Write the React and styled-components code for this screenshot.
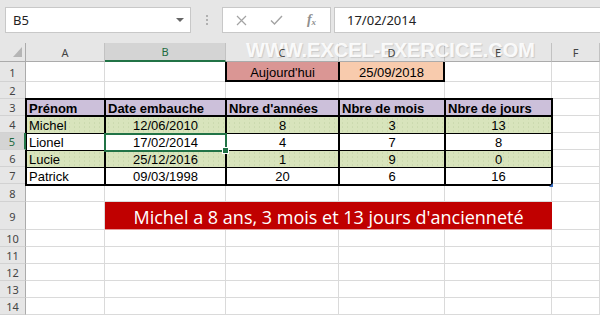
import React from 'react';
import styled, { createGlobalStyle } from 'styled-components';

const Global = createGlobalStyle`
  html, body { margin: 0; padding: 0; background: #fff; }
  body { width: 600px; height: 317px; overflow: hidden; font-family: "Liberation Sans", Arial, sans-serif; }
  * { box-sizing: border-box; }
`;

const Window = styled.div`
  width: 600px;
  height: 317px;
  display: flex;
  flex-direction: column;
  overflow: hidden;
  background: #e6e6e6;
`;

/* ---------- formula bar ---------- */
const Toolbar = styled.div`
  flex: none;
  height: 43px;
  padding: 7px 0 0 5px;
  display: flex;
  align-items: flex-start;
  background: #e6e6e6;
`;

const NameBox = styled.div`
  width: 186px;
  height: 26px;
  background: #fff;
  border: 1px solid #c8c8c8;
  display: flex;
  align-items: center;
  justify-content: space-between;
  padding: 0 6px 0 7px;
  font: 13px "Noto Sans", sans-serif;
  color: #222;
`;

const Caret = styled.span`
  width: 0;
  height: 0;
  border-left: 4px solid transparent;
  border-right: 4px solid transparent;
  border-top: 4px solid #666;
`;

const Grip = styled.div`
  width: 31px;
  height: 26px;
  display: flex;
  flex-direction: column;
  align-items: center;
  justify-content: center;
  gap: 2px;
`;

const GripDot = styled.span`
  width: 2px;
  height: 2px;
  background: #b0b0b0;
`;

const FxBox = styled.div`
  width: 109px;
  height: 26px;
  background: #fff;
  border: 1px solid #c8c8c8;
  display: flex;
  align-items: center;
  padding-left: 1px;
`;

const FxSlot = styled.div`
  width: 35px;
  height: 24px;
  display: flex;
  align-items: center;
  justify-content: center;
  color: #a3a3a3;
`;

const FxLabel = styled.span`
  font: italic bold 14px "Liberation Serif", serif;
  color: #8f8f8f;
  & sub { font-size: 9px; vertical-align: -1px; }
`;

const FormulaInput = styled.div`
  flex: 1;
  height: 26px;
  margin-left: 3px;
  margin-right: -3px;
  background: #fff;
  border: 1px solid #c8c8c8;
  display: flex;
  align-items: center;
  padding-left: 12px;
  font: 13px "Noto Sans", sans-serif;
  color: #222;
`;

/* ---------- sheet ---------- */
const Sheet = styled.div`
  position: relative;
  flex: 1;
  display: grid;
  grid-template-columns: 26px 79px 121px 113px 106px 107px 1fr;
  grid-template-rows: 19px 20px repeat(6, 17px) 18px 28px repeat(5, 17px);
  background: #fff;
  overflow: hidden;
`;

const Corner = styled.div`
  grid-row: 1;
  grid-column: 1;
  background: #e6e6e6;
  border-right: 1px solid #ababab;
  border-bottom: 1px solid #ababab;
  display: flex;
  align-items: flex-end;
  justify-content: flex-end;
  padding: 0 3px 4px 0;
`;

const ColHead = styled.div`
  grid-row: 1;
  grid-column: ${p => p.$c};
  display: flex;
  align-items: center;
  justify-content: center;
  background: ${p => (p.$sel ? '#d4d4d4' : '#e6e6e6')};
  border-right: 1px solid #c2c2c2;
  border-bottom: ${p => (p.$sel ? '2px solid #217346' : '1px solid #ababab')};
  font: 11px "Noto Sans", sans-serif;
  color: ${p => (p.$sel ? '#1e6b41' : '#444')};
`;

const HeadLabel = styled.span`
  position: relative;
  z-index: 2;
`;

const RowHead = styled.div`
  grid-row: ${p => p.$r};
  grid-column: 1;
  position: relative;
  z-index: ${p => (p.$sel ? 3 : 'auto')};
  display: flex;
  align-items: center;
  justify-content: center;
  padding-top: 1px;
  background: ${p => (p.$sel ? '#d4d4d4' : '#e6e6e6')};
  border-bottom: 1px solid #d2d2d2;
  border-right: ${p => (p.$sel ? '2px solid #217346' : '1px solid #ababab')};
  font: 11px "Noto Sans", sans-serif;
  color: ${p => (p.$sel ? '#1e6b41' : '#444')};
`;

const GridCell = styled.div`
  grid-row: ${p => p.$r};
  grid-column: ${p => p.$c};
  border-right: 1px solid #dadada;
  border-bottom: 1px solid #dadada;
  background: #fff;
`;

const Watermark = styled.div`
  position: absolute;
  top: 0;
  left: 246px;
  z-index: 1;
  font: bold 20px "Liberation Sans", Arial, sans-serif;
  line-height: 14px;
  color: rgba(255, 255, 255, 0.9);
  text-shadow: 1px 1px 1px rgba(0, 0, 0, 0.12);
  white-space: nowrap;
  pointer-events: none;
`;

const TodayBox = styled.div`
  grid-row: 2;
  grid-column: 4 / 6;
  margin-left: -1px;
  position: relative;
  z-index: 1;
  display: grid;
  grid-template-columns: 111px 1fr;
  column-gap: 2px;
  padding: 0 2px 2px;
  background: #000;
`;

const DataTable = styled.div`
  grid-row: 4 / 9;
  grid-column: 2 / 7;
  margin: -1px -1px -2px -1px;
  position: relative;
  z-index: 1;
  display: grid;
  grid-template-columns: 77px 119px 111px 104px 1fr;
  grid-template-rows: repeat(5, 1fr);
  gap: 1px 2px;
  padding: 2px;
  background: #000;
`;

const fills = {
  white: '#ffffff',
  purple: '#ccc0da',
  green: '#d8e4bc',
  pink: '#da9694',
  peach: '#f8cbad',
};

const TCell = styled.div`
  position: relative;
  display: flex;
  align-items: flex-end;
  justify-content: ${p => (p.$left ? 'flex-start' : 'center')};
  padding: 0 2px;
  line-height: 14px;
  font-size: 13px;
  font-family: "Liberation Sans", Arial, sans-serif;
  font-weight: ${p => (p.$bold ? 700 : 400)};
  color: #000;
  white-space: nowrap;
  background-color: ${p => fills[p.$fill || 'white']};
  background-image: ${p =>
    p.$fill === 'green'
      ? 'radial-gradient(circle, rgba(150,175,120,0.18) 0.6px, transparent 0.9px)'
      : 'none'};
  background-size: 5px 4px;
  box-shadow: ${p => (p.$head ? 'inset 0 -1px 0 #000' : 'none')};
`;

const Selection = styled.div`
  position: absolute;
  top: -1px;
  left: -2px;
  right: -2px;
  bottom: -2px;
  border: 2px solid #217346;
  z-index: 2;
  pointer-events: none;
`;

const FillHandle = styled.span`
  position: absolute;
  right: -4px;
  bottom: -4px;
  width: 7px;
  height: 7px;
  background: #217346;
  border: 1px solid #fff;
`;

const TableMark = styled.span`
  position: absolute;
  right: -2px;
  bottom: -3px;
  width: 0;
  height: 0;
  border-left: 4px solid transparent;
  border-bottom: 4px solid #3b6fc2;
  z-index: 2;
`;

const Banner = styled.div`
  grid-row: 10;
  grid-column: 3 / 7;
  background: #c00000;
  border-bottom: 1px solid #e49a9a;
  display: flex;
  align-items: center;
  justify-content: center;
  padding-top: 2px;
  color: #fff;
  font: 18px "Open Sans", "Noto Sans", sans-serif;
  white-space: nowrap;
`;

const COLS = ['A', 'B', 'C', 'D', 'E', 'F'];

const covered = (r, c) => {
  if (r === 1 && (c === 2 || c === 3)) return true;
  if (r >= 3 && r <= 7 && c <= 4) return true;
  if (r === 9 && c >= 1 && c <= 4) return true;
  return false;
};

const tableRows = [
  { fill: 'purple', head: true, cells: ['Prénom', 'Date embauche', "Nbre d'années", 'Nbre de mois', 'Nbre de jours'] },
  { fill: 'green', cells: ['Michel', '12/06/2010', '8', '3', '13'] },
  { fill: 'white', cells: ['Lionel', '17/02/2014', '4', '7', '8'] },
  { fill: 'green', cells: ['Lucie', '25/12/2016', '1', '9', '0'] },
  { fill: 'white', cells: ['Patrick', '09/03/1998', '20', '6', '16'] },
];

const XIcon = () => (
  <svg width="11" height="11" viewBox="0 0 11 11">
    <path d="M1 1 L10 10 M10 1 L1 10" stroke="#a3a3a3" strokeWidth="1.2" fill="none" />
  </svg>
);

const CheckIcon = () => (
  <svg width="13" height="10" viewBox="0 0 13 10">
    <path d="M1 5.5 L4.5 9 L12 1" stroke="#a3a3a3" strokeWidth="1.4" fill="none" />
  </svg>
);

const CornerTriangle = () => (
  <svg width="9" height="10" viewBox="0 0 9 10">
    <polygon points="9,0 9,10 0,10" fill="#b5b5b5" />
  </svg>
);

export default function App() {
  const empties = [];
  for (let r = 1; r <= 14; r++) {
    for (let c = 0; c < 6; c++) {
      if (!covered(r, c)) empties.push(<GridCell key={`${r}-${c}`} $r={r + 1} $c={c + 2} />);
    }
  }

  return (
    <Window>
      <Global />
      <Toolbar>
        <NameBox>
          <span>B5</span>
          <Caret />
        </NameBox>
        <Grip>
          <GripDot />
          <GripDot />
          <GripDot />
        </Grip>
        <FxBox>
          <FxSlot><XIcon /></FxSlot>
          <FxSlot><CheckIcon /></FxSlot>
          <FxSlot><FxLabel>f<sub>x</sub></FxLabel></FxSlot>
        </FxBox>
        <FormulaInput>17/02/2014</FormulaInput>
      </Toolbar>

      <Sheet>
        <Corner><CornerTriangle /></Corner>
        {COLS.map((l, i) => (
          <ColHead key={l} $c={i + 2} $sel={l === 'B'}>
            <HeadLabel>{l}</HeadLabel>
          </ColHead>
        ))}
        {Array.from({ length: 14 }, (_, i) => (
          <RowHead key={i} $r={i + 2} $sel={i + 1 === 5}>{i + 1}</RowHead>
        ))}
        {empties}

        <TodayBox>
          <TCell $fill="pink">Aujourd'hui</TCell>
          <TCell $fill="peach">25/09/2018</TCell>
        </TodayBox>

        <DataTable>
          {tableRows.map((row, ri) =>
            row.cells.map((txt, ci) => (
              <TCell
                key={`${ri}-${ci}`}
                $fill={row.fill}
                $bold={row.head}
                $head={row.head}
                $left={row.head || ci === 0}
              >
                {txt}
                {ri === 2 && ci === 1 && (
                  <Selection>
                    <FillHandle />
                  </Selection>
                )}
                {ri === 4 && ci === 4 && <TableMark />}
              </TCell>
            ))
          )}
        </DataTable>

        <Banner>Michel a 8 ans, 3 mois et 13 jours d'ancienneté</Banner>

        <Watermark>WWW.EXCEL-EXERCICE.COM</Watermark>
      </Sheet>
    </Window>
  );
}
